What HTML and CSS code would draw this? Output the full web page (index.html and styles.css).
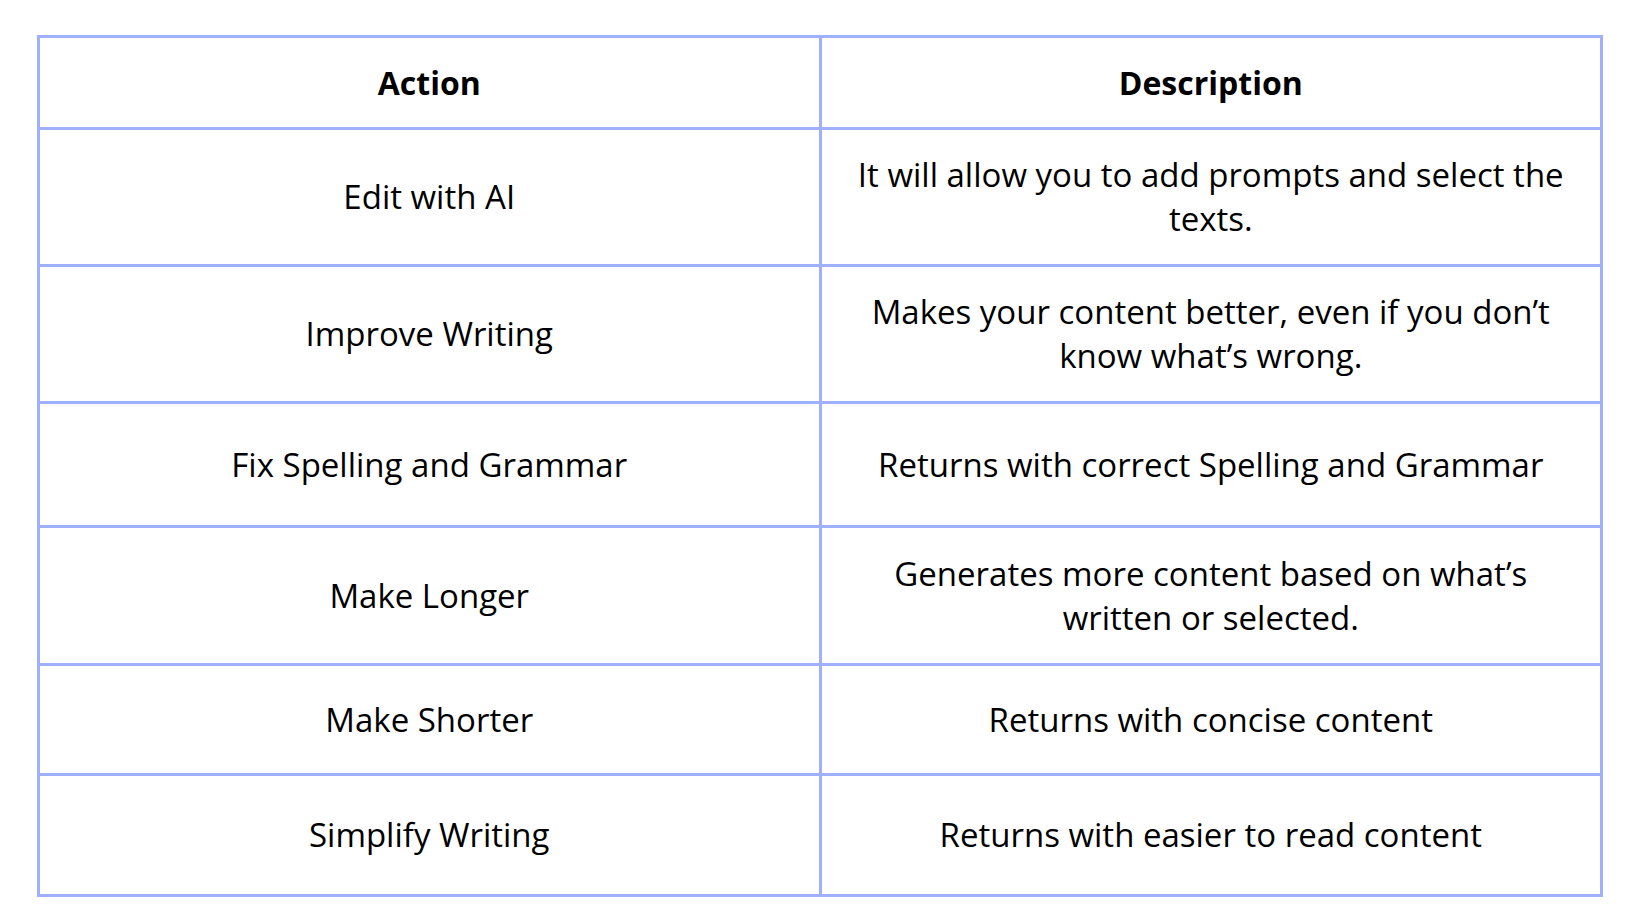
FILE: index.html
```html
<!DOCTYPE html>
<html lang="en">
<head>
<meta charset="utf-8">
<title>AI Actions</title>
<link rel="stylesheet" href="styles.css">
</head>
<body>
<main class="page">
  <table class="actions">
    <thead>
      <tr class="row-head">
        <th>Action</th>
        <th>Description</th>
      </tr>
    </thead>
    <tbody>
      <tr class="row-edit">
        <td>Edit with AI</td>
        <td>It will allow you to add prompts and select the texts.</td>
      </tr>
      <tr class="row-improve">
        <td>Improve Writing</td>
        <td>Makes your content better, even if you don’t know what’s wrong.</td>
      </tr>
      <tr class="row-fix">
        <td>Fix Spelling and Grammar</td>
        <td>Returns with correct Spelling and Grammar</td>
      </tr>
      <tr class="row-longer">
        <td>Make Longer</td>
        <td>Generates more content based on what’s written or selected.</td>
      </tr>
      <tr class="row-shorter">
        <td>Make Shorter</td>
        <td>Returns with concise content</td>
      </tr>
      <tr class="row-simplify">
        <td>Simplify Writing</td>
        <td>Returns with easier to read content</td>
      </tr>
    </tbody>
  </table>
</main>
</body>
</html>
```

FILE: styles.css
```css
html, body {
  margin: 0;
  padding: 0;
  background: #ffffff;
}

.page {
  padding: 35px 37px 0 37px;
  font-family: "Open Sans", "Noto Sans", sans-serif;
  color: #000000;
}

.actions {
  width: 1566px;
  border-collapse: collapse;
  table-layout: fixed;
  border: 3px solid #9eb0ff;
}

.actions th,
.actions td {
  border: 3px solid #9eb0ff;
  text-align: center;
  vertical-align: middle;
  padding: 0 28px;
  line-height: 44px;
}

.actions th {
  font-weight: 700;
  font-size: 32px;
}

.actions td {
  font-weight: 400;
  font-size: 33px;
}

.row-head { height: 92px; }
.row-edit { height: 137px; }
.row-improve { height: 137px; }
.row-fix { height: 124px; }
.row-longer { height: 138px; }
.row-shorter { height: 110px; }
.row-simplify { height: 121px; }
```
